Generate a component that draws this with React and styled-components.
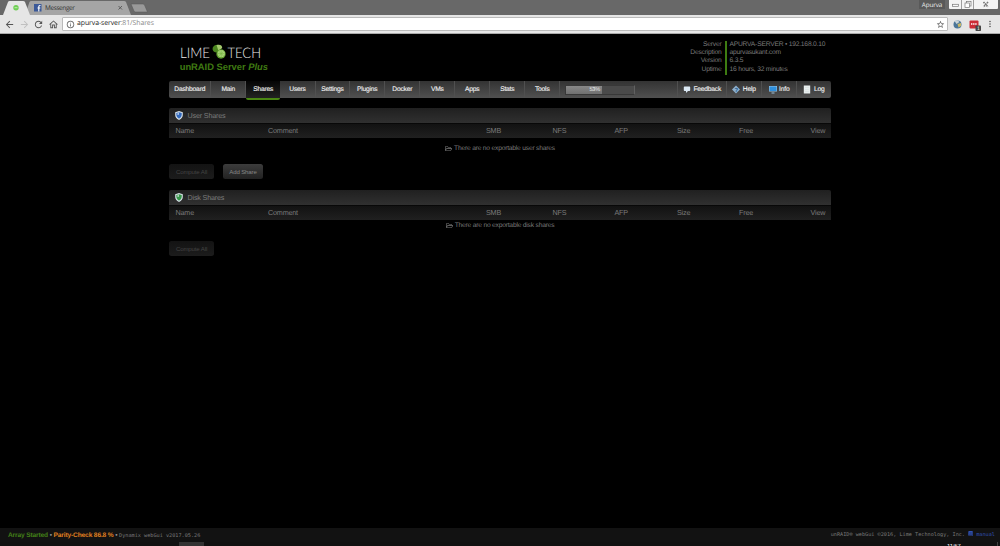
import styled, { createGlobalStyle, css } from "styled-components"
import { FaRegFolderOpen, FaBook } from "react-icons/fa"
import { MdArrowBack, MdArrowForward, MdRefresh, MdOutlineHome, MdInfoOutline, MdStarBorder, MdMoreVert } from "react-icons/md"

const GlobalStyle = createGlobalStyle`
* { box-sizing: border-box; }
body {
    margin: 0;
    background: #000;
    overflow: hidden;
    font-family: "Liberation Sans", Arial, sans-serif;
    text-rendering: geometricPrecision;
}
`

const Screen = styled.div`
width: 1000px;
height: 546px;
display: flex;
flex-direction: column;
background: #000;
color: #7a7a7a;
font-size: 6.7px;
letter-spacing: -0.21px;
white-space: nowrap;
`

/* browser */
const TabStrip = styled.div`
height: 15px;
flex: none;
display: flex;
background: #686868;
`
const TabShapes = styled.svg`
width: 152px;
height: 15px;
flex: none;
letter-spacing: 0;
`
const WindowButtons = styled.div`
margin-left: auto;
padding-right: 2px;
display: flex;
align-items: flex-start;
`
const Profile = styled.div`
width: 26px;
height: 9px;
margin-right: 4px;
background: #595959;
color: #eee;
font: 6.3px/9px "Open Sans", sans-serif;
letter-spacing: -0.1px;
text-align: center;
`
const WindowControls = styled.svg`
width: 49px;
height: 9px;
`
const Toolbar = styled.div`
height: 19px;
flex: none;
display: flex;
align-items: center;
padding: 0 5px 0 4px;
background: #e6e6e6;
border-bottom: 1px solid #aaa;
color: #555;
font-size: 11px;
`
const NavIcons = styled.div`
display: flex;
gap: 3.6px;
width: 58px;
svg:nth-child(2) { color: #c0c0c0; }
`
const Address = styled.div`
flex: 1;
height: 14px;
display: flex;
align-items: center;
padding: 0 2px 0 3px;
background: #fff;
border: 1px solid #bbb;
border-radius: 1px;
svg { flex: none; }
`
const Url = styled.div`
margin-left: 2px;
flex: 1;
color: #222;
font: 6.9px/12px "Open Sans", sans-serif;
letter-spacing: -0.08px;
span { color: #888; }
`
const Extensions = styled.svg`
width: 32px;
height: 13px;
margin-left: 5px;
`

/* page */
const Page = styled.div`
width: 662px;
height: 494px;
margin: 0 auto;
padding-top: 5px;
`
const Header = styled.div`
height: 42px;
display: flex;
justify-content: space-between;
`
const Brand = styled.div`
padding: 3px 0 0 10.7px;
svg { display: block; }
`
const Version = styled.div`
margin-top: 1px;
color: #3f7a12;
font-size: 9.35px;
line-height: 11px;
letter-spacing: 0;
font-weight: bold;
`
const ServerInfo = styled.div`
display: flex;
width: 140px;
padding-top: 1.5px;
line-height: 8.4px;
`
const Labels = styled.div`
width: 36px;
height: 34px;
text-align: right;
padding-right: 3.5px;
border-right: 2px solid #3e7c12;
display: flex;
flex-direction: column;
align-items: flex-end;
`
const Values = styled.div`
padding-left: 2.5px;
`
const Menu = styled.div`
height: 17px;
display: flex;
border-radius: 2px;
background: linear-gradient(#333, #505050);
color: #f0f0f0;
line-height: 17.5px;
`
const MenuItem = styled.div`
width: ${({ $w }) => $w}px;
padding-left: 0.5px;
text-align: center;
border-right: 1px solid #505050;
-webkit-text-stroke: 0.12px #f0f0f0;
${({ $active }) => $active && css`
    height: 19px;
    background: linear-gradient(#050505, #222);
    border-right: none;
    border-bottom: 2px solid #4a8713;
    border-radius: 0 0 2px 2px;
`}
`
const Usage = styled.div`
width: 70px;
height: 10px;
margin: 3.5px 0 0 5px;
background: #4a4a4a;
border: 1px solid #383838;
border-right-color: #606060;
`
const UsageFill = styled.div`
height: 8px;
background: linear-gradient(#888, #707070);
text-align: right;
padding-right: 2px;
font-size: 5.6px;
line-height: 9px;
`
const Tools = styled.div`
margin-left: auto;
display: flex;
`
const Tool = styled.div`
width: ${({ $w }) => $w}px;
display: flex;
align-items: center;
justify-content: center;
gap: 2.5px;
border-left: 1px solid #505050;
-webkit-text-stroke: 0.12px #f0f0f0;
svg { width: 8px; height: 9px; -webkit-text-stroke: 0; }
`
const Panel = styled.div`
margin-top: ${({ $top }) => $top}px;
`
const Title = styled.div`
height: 15px;
display: flex;
align-items: center;
gap: 4.5px;
padding-left: 6px;
border-radius: 2px 2px 0 0;
background: linear-gradient(#202020, #303030);
font-size: 7.2px;
letter-spacing: -0.18px;
`
const Columns = styled.div`
display: grid;
grid-template-columns: 92.5px 218px 66.5px 62px 62.5px 62px 71.5px 1fr;
height: 15px;
padding: 0 0 0 6.5px;
background: linear-gradient(#121212, #202020);
border-top: 1px solid #080808;
font-size: 7.2px;
letter-spacing: -0.18px;
line-height: 14px;
`
const Empty = styled.div`
height: ${({ $h }) => $h}px;
display: flex;
align-items: center;
justify-content: center;
gap: 2px;
`
const Buttons = styled.div`
margin-top: ${({ $top }) => $top}px;
display: flex;
gap: 9px;
`
const Button = styled.button`
width: ${({ $w }) => $w}px;
height: 15px;
padding: 0;
border: 0;
border-radius: 2.5px;
background: linear-gradient(#3c3c3c, #222);
color: #858585;
font: 6.1px/15px "Liberation Sans", Arial, sans-serif;
letter-spacing: -0.15px;
&:disabled {
    background: linear-gradient(#131313, #1c1c1c);
    color: #444;
}
`
const Footer = styled.div`
height: 14px;
flex: none;
display: flex;
justify-content: space-between;
padding: 0 5px 0 8px;
background: #121212;
font: 5.2px/15px "DejaVu Sans Mono", monospace;
letter-spacing: 0;
`
const Status = styled.span`
font: bold 6.6px/15px "Liberation Sans", Arial, sans-serif;
letter-spacing: -0.14px;
color: ${({ $color }) => $color};
`
const Manual = styled.span`
color: #3050b0;
`
const Taskbar = styled.svg`
width: 1000px;
height: 4px;
flex: none;
`

const menu = [["Dashboard", 42], ["Main", 35], ["Shares", 34], ["Users", 35.5], ["Settings", 34.5], ["Plugins", 35], ["Docker", 35], ["VMs", 35], ["Apps", 35], ["Stats", 35], ["Tools", 35]]
const columns = ["Name", "Comment", "SMB", "NFS", "AFP", "Size", "Free", "View"]

const Shield = ({ color }) => (
    <svg width="8" height="9" viewBox="0 0 8 9">
        <path d="M4 0 7.8 1.3V4Q7.8 7.2 4 9 .2 7.2.2 4V1.3Z" fill="#d8e2e8" />
        <path d="M4 1.2 6.7 2.1V4Q6.7 6.5 4 7.8 1.3 6.5 1.3 4V2.1Z" fill={color} />
        <path d="M1.5 3.2 4 1.3V4Z" fill="#fff" opacity=".6" />
    </svg>
)

const Logo = () => (
    <svg width="84" height="19" viewBox="0 0 84 19">
        <g fill="#eee" fontFamily="Lato" fontSize="14.6" fontWeight="300" letterSpacing="0">
            <text x="0" y="15.6" textLength="30" lengthAdjust="spacingAndGlyphs">LIME</text>
            <text x="47.5" y="15.6" textLength="33.5" lengthAdjust="spacingAndGlyphs">TECH</text>
        </g>
        <path d="M33 5Q35 1.800 39.500 3L39.500 9Q37 11.500 34 9.800 31.800 7.800 33 5Z" fill="#4b861f" />
        <path d="M36.500 3Q42 1.800 42.200 6L38.500 9Z" fill="#a4c96d" />
        <circle cx="41" cy="12" r="4.700" fill="#5b9b2b" />
        <circle cx="41.200" cy="11.600" r="3.700" fill="#a8d477" />
        <path d="M41.200 8.200V15M37.800 11.600H44.600M38.800 9.200 43.600 14M43.600 9.200 38.800 14" stroke="#79b544" strokeWidth=".6" />
    </svg>
)

const ShareTable = ({ title, color, top, kind, height }) => (
    <Panel $top={top}>
        <Title><Shield color={color} />{title}</Title>
        <Columns>{columns.map((name) => <span key={name}>{name}</span>)}</Columns>
        <Empty $h={height}><FaRegFolderOpen size={7} />There are no exportable {kind} shares</Empty>
    </Panel>
)

const Browser = () => (
    <>
        <TabStrip>
            <TabShapes viewBox="0 0 152 15">
                <path d="M25 15 29.5 2Q30 1 31 1H124Q125.5 1 126 2L131 15Z" fill="#a5a5a5" />
                <path d="M3 15 8 2Q8.5 1 9.5 1H23Q24.5 1 25 2L30 15Z" fill="#e6e6e6" />
                <path d="M131 4H143Q144 4 144.5 5L147.5 12H135.5Q134.5 12 134 11Z" fill="#999" stroke="#555" strokeWidth=".5" />
                <circle cx="16" cy="7.7" r="2.7" fill="#70cf55" />
                <path d="M14.5 7.7H17.5" stroke="#d0f5c4" strokeWidth=".8" />
                <path d="M118.5 6 122 9.5M122 6 118.5 9.5" stroke="#555" strokeWidth=".9" />
                <rect x="34" y="4" width="7.5" height="7.5" fill="#3b5998" />
                <path d="M40.5 5.5H39.8Q38.8 5.5 38.8 6.5V11.5M37.5 8H40.3" stroke="#fff" strokeWidth="1.1" fill="none" />
                <text x="45" y="10" fontSize="6.5" fontFamily="Open Sans" fill="#333" textLength="30">Messenger</text>
            </TabShapes>
            <WindowButtons>
                <Profile>Apurva</Profile>
                <WindowControls viewBox="0 0 49 9">
                    <path d="M0 0H49V8Q49 9 48 9H1Q0 9 0 8Z" fill="#f4f4f4" />
                    <path d="M12.5 0V9M24.5 0V9" stroke="#888" strokeWidth=".8" />
                    <g fill="#fff" stroke="#777" strokeWidth=".7">
                        <rect x="3.5" y="4.3" width="6" height="2" />
                        <rect x="17.5" y="1.5" width="4.5" height="4.5" />
                        <rect x="16" y="3" width="4.5" height="4.500" />
                        <path d="M34.500 2 39 7M39 2 34.500 7" strokeWidth="1.600" strokeDasharray="1.500 .7" />
                    </g>
                </WindowControls>
            </WindowButtons>
        </TabStrip>
        <Toolbar>
            <NavIcons><MdArrowBack /><MdArrowForward /><MdRefresh /><MdOutlineHome /></NavIcons>
            <Address>
                <MdInfoOutline size={9} />
                <Url>apurva-server<span>:81/Shares</span></Url>
                <MdStarBorder size={9} />
            </Address>
            <Extensions viewBox="0 0 32 13">
                <circle cx="4.5" cy="6.5" r="4" fill="#4a7599" />
                <path d="M1.5 3Q4.5 1 6.5 4L3.5 6Z" fill="#cad4d9" />
                <path d="M4.500 6 8 5V8L5.500 9.500Z" fill="#c9b765" />
                <rect x="16.500" y="2.500" width="9" height="8" rx="1" fill="#cc2a36" />
                <path d="M18 6H24" stroke="#fff" strokeWidth="1.300" strokeDasharray="1.400 .7" />
                <rect x="22.500" y="7.500" width="5.500" height="5.500" rx=".8" fill="#444" />
                <text x="24.100" y="12.200" fontSize="5" fill="#fff">1</text>
            </Extensions>
            <MdMoreVert size={10} />
        </Toolbar>
    </>
)

const App = () => {
    return (
        <Screen>
            <GlobalStyle />
            <Browser />
            <Page>
                <Header>
                    <Brand>
                        <Logo />
                        <Version>unRAID Server <i>Plus</i></Version>
                    </Brand>
                    <ServerInfo>
                        <Labels><span>Server</span><span>Description</span><span>Version</span><span>Uptime</span></Labels>
                        <Values>
                            <div>APURVA-SERVER • 192.168.0.10</div>
                            <div>apurvasukant.com</div>
                            <div>6.3.5</div>
                            <div>16 hours, 32 minutes</div>
                        </Values>
                    </ServerInfo>
                </Header>
                <Menu>
                    {menu.map(([name, width]) => <MenuItem key={name} $w={width} $active={name === "Shares"}>{name}</MenuItem>)}
                    <Usage><UsageFill style={{ width: "53%" }}>53%</UsageFill></Usage>
                    <Tools>
                        <Tool $w={49}>
                            <svg viewBox="0 0 8 9"><path d="M1.500 1.500H6.500Q7.200 1.500 7.200 2.300V5Q7.200 6 6.500 6H5L3 8V6H1.500Q.8 6 .8 5V2.300Q.8 1.500 1.500 1.500Z" fill="#dce9f5" /></svg>
                            Feedback
                        </Tool>
                        <Tool $w={35}>
                            <svg viewBox="0 0 8 9"><path d="M4 .5 8 4.500 4 8.500 0 4.500Z" fill="#8cb0d0" /><text x="2.400" y="6.700" fontSize="6" fontWeight="bold" fill="#24527d">?</text></svg>
                            Help
                        </Tool>
                        <Tool $w={35}>
                            <svg viewBox="0 0 8 9"><path d="M0 1H8V6.500H0ZM2.500 7.500H5.500V8.500H2.500Z" fill="#9bc3e0" /><path d="M.5 1.500H7.500V6H.5Z" fill="#2f8fdc" /></svg>
                            Info
                        </Tool>
                        <Tool $w={35}>
                            <svg viewBox="0 0 8 9"><path d="M.8.500H7.200V8.500H.8Z" fill="#e8eeee" /><path d="M2 2.500H6M2 4.500H6M2 6.500H6" stroke="#d3dcdc" strokeWidth=".5" /></svg>
                            Log
                        </Tool>
                    </Tools>
                </Menu>
                <ShareTable title="User Shares" color="#3269bd" top={10} kind="user" height={21} />
                <Buttons $top={5}>
                    <Button $w={45} disabled>Compute All</Button>
                    <Button $w={40}>Add Share</Button>
                </Buttons>
                <ShareTable title="Disk Shares" color="#36964a" top={11} kind="disk" height={11} />
                <Buttons $top={10}>
                    <Button $w={45} disabled>Compute All</Button>
                </Buttons>
            </Page>
            <Footer>
                <div>
                    <Status $color="#438018">Array Started</Status>
                    <Status $color="#999"> • </Status>
                    <Status $color="#e08020">Parity-Check 86.8 %</Status>
                    <Status $color="#999"> • </Status>
                    Dynamix webGui v2017.05.26
                </div>
                <div>unRAID® webGui ©2016, Lime Technology, Inc. <Manual><FaBook size={5} /> manual</Manual></div>
            </Footer>
            <Taskbar viewBox="0 0 1000 4">
                <path d="M0 0H1000V4H0Z" fill="#111" />
                <path d="M179 0H204V4H179Z" fill="#333" />
                <path d="M997.500 0V4" stroke="#555" strokeWidth=".7" />
                <text x="947" y="5.500" fontSize="6" fill="#fff">11:57</text>
            </Taskbar>
        </Screen>
    )
}

export default App
